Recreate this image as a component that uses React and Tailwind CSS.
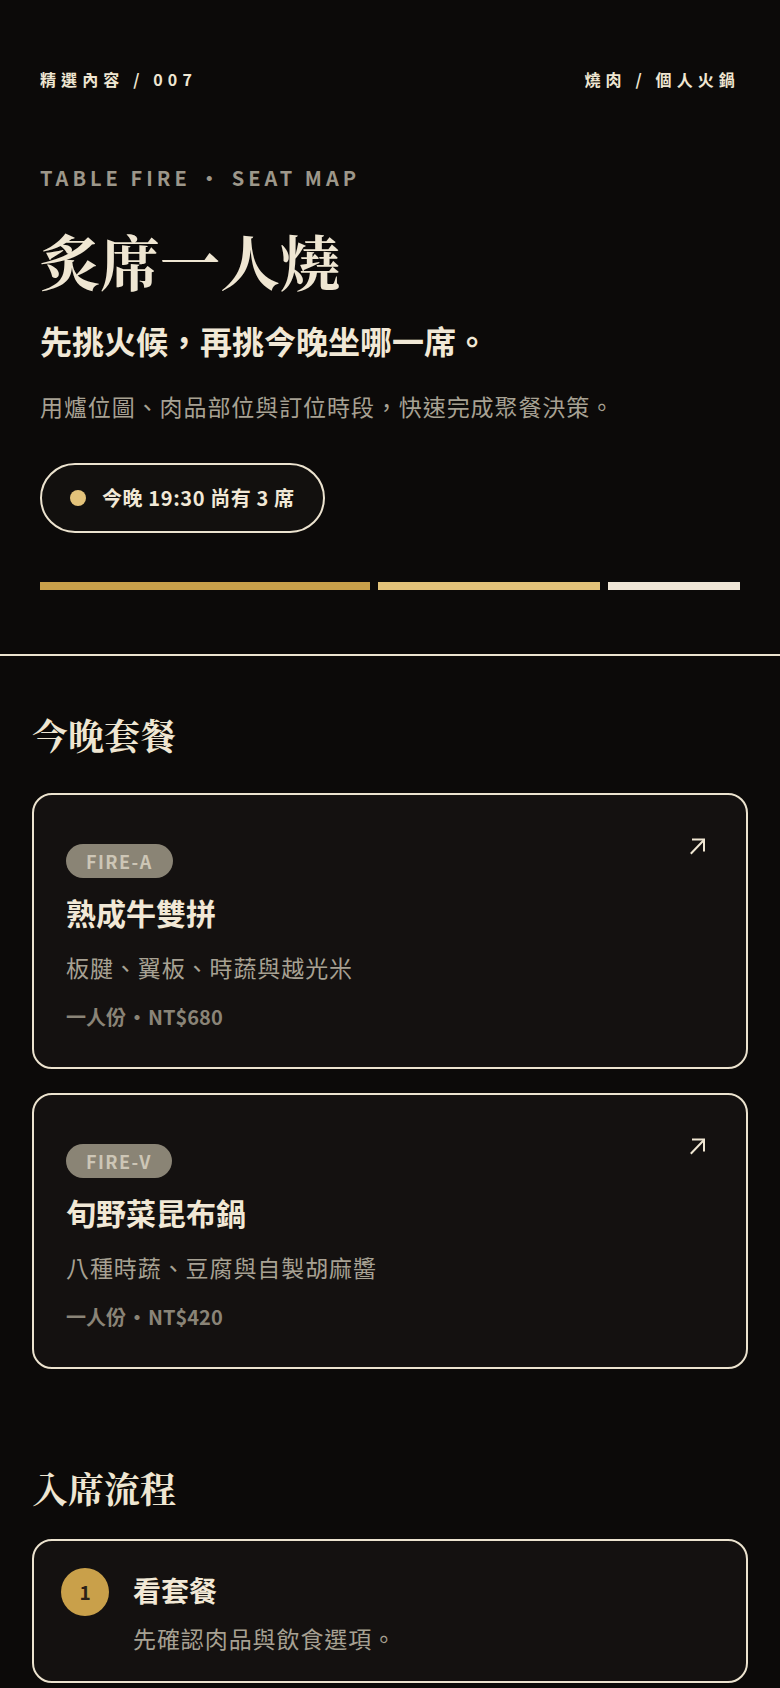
const sans = "font-['Noto_Sans_CJK_TC','Noto_Sans',sans-serif]";
const serif = "font-['Noto_Serif_CJK_TC','Noto_Serif_CJK_SC','Noto_Serif_CJK',serif]";

const menus = [
    { code: 'FIRE-A', name: '熟成牛雙拼', desc: '板腱、翼板、時蔬與越光米', serving: '一人份', price: 'NT$680' },
    { code: 'FIRE-V', name: '旬野菜昆布鍋', desc: '八種時蔬、豆腐與自製胡麻醬', serving: '一人份', price: 'NT$420' },
];

function ArrowIcon() {
    return (
        <svg width="17" height="18" viewBox="0 0 17 18" fill="none" stroke="#efe6d2" strokeWidth="2" strokeLinecap="square">
            <path d="M2.5 16 L14.5 3.5" />
            <path d="M4 2.5 H15 V13.5" />
        </svg>
    );
}

function MenuCard({ code, name, desc, serving, price }) {
    return (
        <div className="rounded-[20px] border-2 border-[#ece3cf] bg-[#141110] px-8 pt-8 pb-[36px]">
            <div className="flex items-start justify-between">
                <span className="mt-[17px] inline-flex h-[34px] items-center rounded-full bg-[#8a8475] px-5 text-[18px] font-bold leading-none tracking-[0.08em] text-[#cdc6b6]">
                    {code}
                </span>
                <span className="mt-[10px] mr-[8px]">
                    <ArrowIcon />
                </span>
            </div>
            <h3 className="mt-[14px] text-[30px] font-bold leading-[40px] text-[#f1e8d6]">{name}</h3>
            <p className="mt-[19px] text-[23px] leading-[32px] tracking-[0.04em] text-[#a7a193]">{desc}</p>
            <p className="mt-[20px] text-[20px] font-bold leading-[28px] text-[#8a8477]">
                {serving}
                <span className="mx-[1px]">•</span>
                {price}
            </p>
        </div>
    );
}

export default function App() {
    return (
        <div className={`min-h-screen bg-[#0c0a09] text-[#efe6d2] ${sans}`}>
            <header className="flex flex-col px-10 pt-[67px] pb-16">
                <div className="flex items-center justify-between text-[16px] font-bold leading-6 tracking-[0.32em] text-[#efe6d2]">
                    <span>精選內容 / 007</span>
                    <span>燒肉 / 個人火鍋</span>
                </div>

                <p className="mt-[73px] text-[20px] font-bold leading-7 tracking-[0.2em] text-[#9d978a]">
                    TABLE FIRE • SEAT MAP
                </p>

                <h1 className={`mt-[34px] text-[60px] font-bold leading-[69px] text-[#efe6d2] ${serif}`}>
                    炙席一人燒
                </h1>

                <p className="mt-[23px] text-[32px] font-bold leading-[44px] text-[#f1e8d6]">
                    先挑火候，再挑今晚坐哪一席。
                </p>

                <p className="mt-[27px] text-[23px] leading-[34px] tracking-[0.04em] text-[#a7a193]">
                    用爐位圖、肉品部位與訂位時段，快速完成聚餐決策。
                </p>

                <div className="mt-10 flex">
                    <div className="flex h-[70px] items-center gap-4 rounded-full border-2 border-[#ece3cf] bg-[#12100e] pl-7 pr-[28px]">
                        <span className="h-4 w-4 rounded-full bg-[#e3c37a]" />
                        <span className="text-[20px] font-bold leading-7 tracking-[0.03em] text-[#f1e8d6]">
                            今晚 19:30 尚有 3 席
                        </span>
                    </div>
                </div>

                <div className="mt-[49px] grid grid-cols-[330fr_222fr_132fr] gap-2">
                    <div className="h-2 bg-[#c9a04a]" />
                    <div className="h-2 bg-[#e3c37a]" />
                    <div className="h-2 bg-[#efe6d6]" />
                </div>
            </header>

            <div className="h-[2px] bg-[#ece3cf]" />

            <section className="px-8 pt-14">
                <h2 className={`text-[36px] font-bold leading-[45px] text-[#efe6d2] ${serif}`}>今晚套餐</h2>
                <div className="mt-9 flex flex-col gap-6">
                    {menus.map((m) => (
                        <MenuCard key={m.code} {...m} />
                    ))}
                </div>
            </section>

            <section className="px-8 pt-[96px] pb-16">
                <h2 className={`text-[36px] font-bold leading-[45px] text-[#efe6d2] ${serif}`}>入席流程</h2>
                <div className="mt-[29px] flex flex-col gap-6">
                    <div className="flex items-start gap-6 rounded-[20px] border-2 border-[#ece3cf] bg-[#141110] p-[27px]">
                        <span className="flex h-12 w-12 shrink-0 items-center justify-center rounded-full bg-[#c9a04a] text-[19px] font-bold text-[#2a2118]">
                            1
                        </span>
                        <div className="flex flex-col">
                            <h3 className="text-[28px] font-bold leading-[44px] text-[#f1e8d6]">看套餐</h3>
                            <p className="mt-[10px] text-[23px] leading-[32px] tracking-[0.04em] text-[#a7a193]">
                                先確認肉品與飲食選項。
                            </p>
                        </div>
                    </div>
                </div>
            </section>
        </div>
    );
}
